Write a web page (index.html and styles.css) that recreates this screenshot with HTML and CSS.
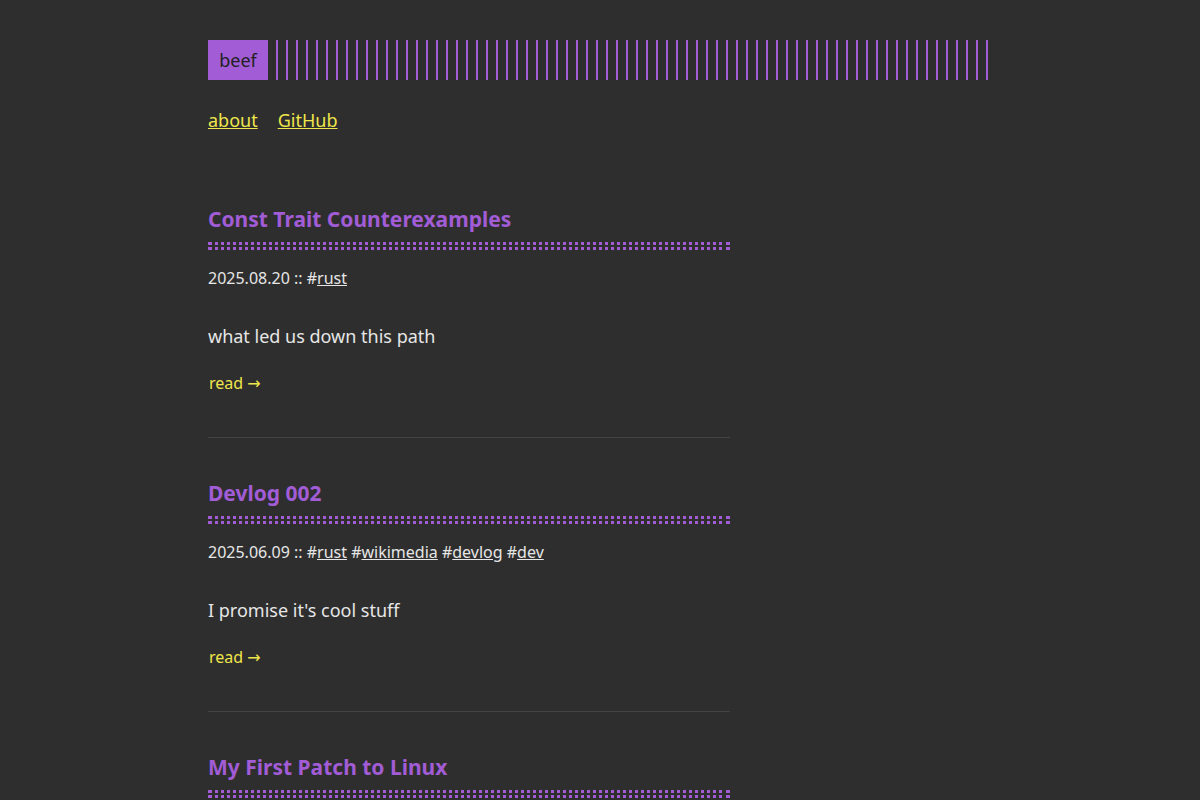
FILE: index.html
```html
<!DOCTYPE html>
<html lang="en">
<head>
<meta charset="utf-8">
<title>beef</title>
<link rel="stylesheet" href="styles.css">
</head>
<body>
<div class="container">
  <header class="header">
    <div class="header-logo">
      <a class="logo" href="#">beef</a>
      <span class="logo-bars"></span>
    </div>
    <nav class="menu">
      <a href="#">about</a>
      <a href="#">GitHub</a>
    </nav>
  </header>
  <main class="posts">
    <article class="post">
      <h2 class="post-title"><a href="#">Const Trait Counterexamples</a></h2>
      <div class="post-meta">2025.08.20 :: #<a href="#">rust</a></div>
      <p class="post-summary">what led us down this path</p>
      <a class="read-more" href="#">read →</a>
    </article>
    <article class="post">
      <h2 class="post-title"><a href="#">Devlog 002</a></h2>
      <div class="post-meta">2025.06.09 :: #<a href="#">rust</a> #<a href="#">wikimedia</a> #<a href="#">devlog</a> #<a href="#">dev</a></div>
      <p class="post-summary">I promise it's cool stuff</p>
      <a class="read-more" href="#">read →</a>
    </article>
    <article class="post">
      <h2 class="post-title"><a href="#">My First Patch to Linux</a></h2>
      <div class="post-meta">2025.05.01 :: #<a href="#">linux</a></div>
      <p class="post-summary">a small patch</p>
      <a class="read-more" href="#">read →</a>
    </article>
  </main>
</div>
</body>
</html>
```

FILE: styles.css
```css
html, body {
  margin: 0;
  padding: 0;
  background: #2e2e2e;
}
body {
  font-family: "Noto Sans", "DejaVu Sans", sans-serif;
  color: #e6e6e6;
  font-size: 16px;
}
.container {
  max-width: 784px;
  margin: 0 auto;
  padding: 40px;
}
.header-logo {
  display: flex;
  height: 40px;
}
.logo {
  display: block;
  background: #a15cd6;
  color: #222;
  text-decoration: none;
  font-size: 18px;
  line-height: 30px;
  padding: 5px 10px;
  width: 40px;
  text-align: center;
}
.logo-bars {
  flex: 1;
  margin-left: 8px;
  background: repeating-linear-gradient(90deg, #a15cd6 0, #a15cd6 2px, transparent 2px, transparent 10px);
}
.menu {
  display: flex;
  gap: 20px;
  margin-top: 26px;
  font-size: 18px;
  line-height: 28px;
}
.menu a {
  color: #eee64a;
}
.posts {
  max-width: 522px;
  margin-top: 71px;
}
.post {
  border-bottom: 1px solid #444;
  padding-bottom: 42px;
  margin-bottom: 41px;
}
.post-title {
  position: relative;
  margin: 0;
  font-size: 21px;
  line-height: 28px;
  font-weight: 700;
  padding-bottom: 14px;
  border-bottom: 3px dotted #a15cd6;
}
.post-title::after {
  content: "";
  position: absolute;
  left: 0;
  right: 0;
  bottom: 2px;
  border-bottom: 3px dotted #a15cd6;
}
.post-title a {
  color: #a15cd6;
  text-decoration: none;
}
.post-meta {
  margin-top: 16px;
  font-size: 16px;
  line-height: 24px;
  color: #e6e6e6;
}
.post-meta a {
  color: #e6e6e6;
}
.post-summary {
  margin: 32px 0 0;
  font-size: 18px;
  line-height: 28px;
}
.read-more {
  display: inline-block;
  margin-top: 21px;
  margin-left: 1px;
  font-size: 16px;
  line-height: 24px;
  color: #eee64a;
  text-decoration: none;
}
```
